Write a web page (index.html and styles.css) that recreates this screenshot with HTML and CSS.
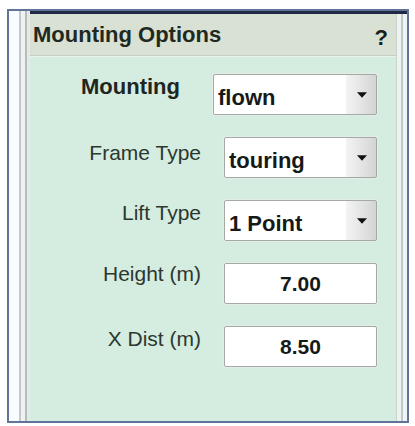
FILE: index.html
```html
<!DOCTYPE html>
<html>
<head>
    <title>Mounting Options</title>
    <link rel="stylesheet" href="styles.css">
</head>
<body>
    <div class="frame">
        <div class="left-strip"></div>
        <div class="rails"></div>
        <div class="main">
            <div class="panel">
                <div class="header">
                    <h1>Mounting Options</h1>
                    <span class="help">?</span>
                </div>
                <div class="options">
                    <div class="row row-main">
                        <label for="mounting" class="label label-main">Mounting</label>
                        <select id="mounting" class="field select select-wide">
                            <option>flown</option>
                        </select>
                    </div>
                    <div class="row">
                        <label for="frameType" class="label label-low">Frame Type</label>
                        <select id="frameType" class="field select">
                            <option>touring</option>
                        </select>
                    </div>
                    <div class="row">
                        <label for="liftType" class="label">Lift Type</label>
                        <select id="liftType" class="field select">
                            <option>1 Point</option>
                        </select>
                    </div>
                    <div class="row">
                        <label for="height" class="label label-high">Height (m)</label>
                        <input type="text" id="height" class="field number" value="7.00">
                    </div>
                    <div class="row">
                        <label for="xDist" class="label">X Dist (m)</label>
                        <input type="text" id="xDist" class="field number" value="8.50">
                    </div>
                </div>
            </div>
            <div class="rails rails-right"></div>
        </div>
    </div>
</body>
</html>
```

FILE: styles.css
```css
* {
    box-sizing: border-box;
}

body {
    margin: 0;
    background-color: #ffffff;
    font-family: 'Liberation Sans', Arial, sans-serif;
}

.frame {
    display: flex;
    width: 402px;
    height: 414px;
    margin: 9px 0 0 7px;
    border: 2px solid #62739a;
    background-color: #f7faff;
}

.left-strip {
    width: 10px;
    background-color: #f8fbff;
}

.rails {
    width: 11px;
    background: linear-gradient(to right,
        #c3c8c9 0 2px,
        #eef2f0 2px 6px,
        #b6bbbc 6px 8px,
        #e4eae6 8px 11px);
}

.main {
    flex: 1;
    display: flex;
    border-top: 3px solid #1f2945;
}

.panel {
    flex: 1;
    display: flex;
    flex-direction: column;
    background-color: #d5ece0;
}

.rails-right {
    background: linear-gradient(to right,
        #c9d4cc 0 1px,
        #eef2f0 1px 5px,
        #c2c7c8 5px 7px,
        #eef3f6 7px 11px);
}

.header {
    display: flex;
    align-items: center;
    justify-content: space-between;
    height: 42px;
    padding: 0 8px 0 3px;
    background-color: #d8e1d4;
    border-bottom: 1px solid #c4cec2;
    box-shadow: 0 1px 0 #e9f3ec;
}

.header h1 {
    margin: 0;
    font-size: 22px;
    font-weight: bold;
    color: #1f291f;
}

.help {
    margin-top: 6px;
    font-size: 22px;
    font-weight: bold;
    color: #1a1f1a;
}

.options {
    display: flex;
    flex-direction: column;
    gap: 22px;
    padding: 18px 19px 0 0;
}

.row {
    display: flex;
    align-items: flex-start;
    justify-content: flex-end;
    gap: 23px;
}

.row-main {
    gap: 33px;
}

.label {
    margin-top: 1px;
    font-size: 21px;
    line-height: 24px;
    color: #2c372f;
}

.label-main {
    font-size: 22px;
    font-weight: bold;
    color: #1e2620;
}

.label-low {
    margin-top: 4px;
}

.label-high {
    margin-top: -1px;
}

.field {
    width: 153px;
    height: 41px;
    margin: 0;
    border: 1px solid #a3aaa4;
    border-radius: 2px;
    background-color: #ffffff;
    font-family: 'Liberation Sans', Arial, sans-serif;
    font-size: 22px;
    font-weight: bold;
    color: #161a17;
    box-shadow: 0 0 0 1px #e3ece6;
    outline: none;
}

.select {
    padding: 6px 34px 0 4px;
    appearance: none;
    background-image:
        url("data:image/svg+xml;charset=UTF-8,%3csvg xmlns='http://www.w3.org/2000/svg' viewBox='0 0 11 6'%3e%3cpath d='M0 0h11L5.5 6z' fill='%23111111'/%3e%3c/svg%3e"),
        linear-gradient(to right, #f4f4f4, #d3d5d4);
    background-repeat: no-repeat, no-repeat;
    background-position: right 9px center, right top;
    background-size: 10px 6px, 30px 100%;
}

.select-wide {
    width: 164px;
}

.number {
    padding: 0;
    font-size: 21px;
    text-align: center;
}
```
